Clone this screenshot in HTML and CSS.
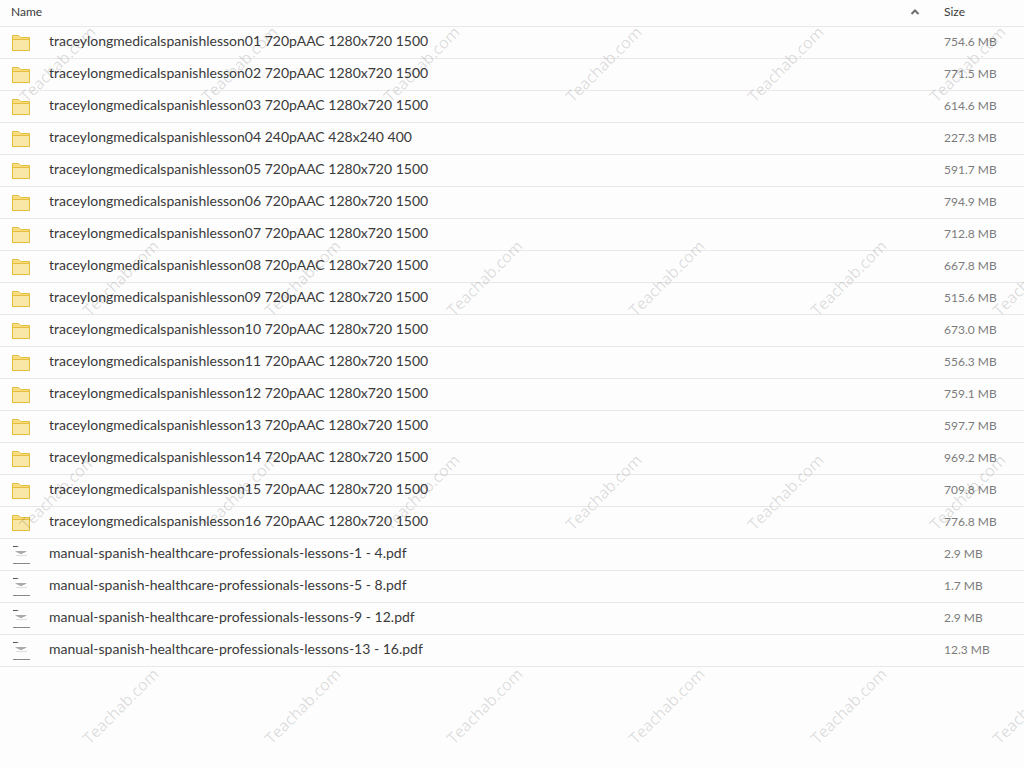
FILE: index.html
```html
<!DOCTYPE html>
<html lang="en">
<head>
    <meta charset="UTF-8">
    <meta name="viewport" content="width=device-width, initial-scale=1.0">
    <title>Files</title>
    <link rel="stylesheet" href="styles.css">
</head>
<body>
    <svg width="0" height="0" class="sprites" aria-hidden="true">
        <symbol id="icon-folder" viewBox="0 0 20 18">
            <path d="M1.5 1.5h6l2 2h9v13h-17z" fill="#fadc85" stroke="#e2be3c"/>
            <path d="M1.5 5.5h17v11h-17z" fill="#f8e7a6" stroke="#e2be3c"/>
        </symbol>
        <symbol id="icon-pdf" viewBox="0 0 20 18">
            <path d="M2 0h4l2 1H2z" fill="#555"/>
            <path d="M4 5h12l-3 2h-1l-1 1H9L8 7H7z" fill="#aaa"/>
            <path d="M5 9h11v1H5z" fill="#dedede"/>
            <path d="M2 17h17v1H2z" fill="#888"/>
        </symbol>
    </svg>

    <table class="files">
        <thead>
            <tr>
                <th class="col-name">
                    <button type="button" class="sort">
                        Name
                        <svg class="caret" width="10" height="6" viewBox="0 0 10 6"><path d="M1.5 5L5 1.5 8.5 5" fill="none" stroke="#6e6e6e" stroke-width="2"/></svg>
                    </button>
                </th>
                <th class="col-size"><button type="button" class="sort">Size</button></th>
            </tr>
        </thead>
        <tbody id="files"></tbody>
    </table>

    <div class="watermark" id="watermark" aria-hidden="true"></div>

    <script>
        const sizes = ['754.6', '771.5', '614.6', '227.3', '591.7', '794.9', '712.8', '667.8',
            '515.6', '673.0', '556.3', '759.1', '597.7', '969.2', '709.8', '776.8'];

        const files = sizes.map((size, i) => {
            const num = String(i + 1).padStart(2, '0');
            const format = num === '04' ? '240pAAC 428x240 400' : '720pAAC 1280x720 1500';
            return { icon: 'folder', name: `traceylongmedicalspanishlesson${num} ${format}`, size };
        });

        files.push(
            { icon: 'pdf', name: 'manual-spanish-healthcare-professionals-lessons-1 - 4.pdf', size: '2.9' },
            { icon: 'pdf', name: 'manual-spanish-healthcare-professionals-lessons-5 - 8.pdf', size: '1.7' },
            { icon: 'pdf', name: 'manual-spanish-healthcare-professionals-lessons-9 - 12.pdf', size: '2.9' },
            { icon: 'pdf', name: 'manual-spanish-healthcare-professionals-lessons-13 - 16.pdf', size: '12.3' }
        );

        document.getElementById('files').innerHTML = files.map(file => `
            <tr>
                <td class="col-name">
                    <a href="#" class="file">
                        <svg class="icon" width="20" height="18"><use href="#icon-${file.icon}"/></svg>
                        <span class="file-name">${file.name}</span>
                    </a>
                </td>
                <td class="col-size">${file.size} MB</td>
            </tr>
        `).join('');

        const cols = Math.ceil(window.innerWidth / 182);
        const rows = Math.ceil(window.innerHeight / 214);
        const marks = '<span class="mark"><span>Teachab.com</span></span>'.repeat(cols);
        document.getElementById('watermark').innerHTML = `<div class="mark-row">${marks}</div>`.repeat(rows);
    </script>
</body>
</html>
```

FILE: styles.css
```css
body { margin: 0; background: #fdfdfd; color: #3a3a3a; font-family: Lato, "Liberation Sans", sans-serif; }
.sprites { position: absolute; }

.files { width: 100%; border-collapse: separate; border-spacing: 0; table-layout: fixed; }
.files th, .files td { box-sizing: border-box; padding: 0 0 2px; border-bottom: 1px solid #e8e8e8; text-align: left; font-weight: normal; vertical-align: middle; }
.files th { height: 27px; }
.files td { height: 32px; }
.files .col-name { padding-left: 11px; }
.files td.col-name { padding-bottom: 0; }
.files .col-size { width: 80px; font-size: 12px; }
.files td.col-size { color: #7c7c7c; }

.sort { display: flex; align-items: center; justify-content: space-between; width: 100%; padding: 0; border: 0; background: none; color: inherit; font: inherit; font-size: 12px; line-height: 24px; cursor: pointer; }
.col-name .sort { padding-right: 24px; }

.file { display: flex; align-items: center; gap: 18px; color: inherit; text-decoration: none; }
.file-name { font-size: 14px; line-height: 26px; padding-bottom: 4px; }
.icon { flex: none; }

.watermark { position: absolute; inset: 0; overflow: hidden; pointer-events: none; }
.mark-row { display: flex; width: max-content; height: 214px; margin-left: -33px; }
.mark-row:first-child { margin-top: -43px; }
.mark-row:nth-child(even) { margin-left: 30px; }
.mark { display: flex; align-items: center; justify-content: center; width: 182px; }
.mark span { transform: rotate(-45deg); color: rgba(0, 0, 0, 0.14); font-family: "Open Sans", sans-serif; font-size: 16px; }
```
